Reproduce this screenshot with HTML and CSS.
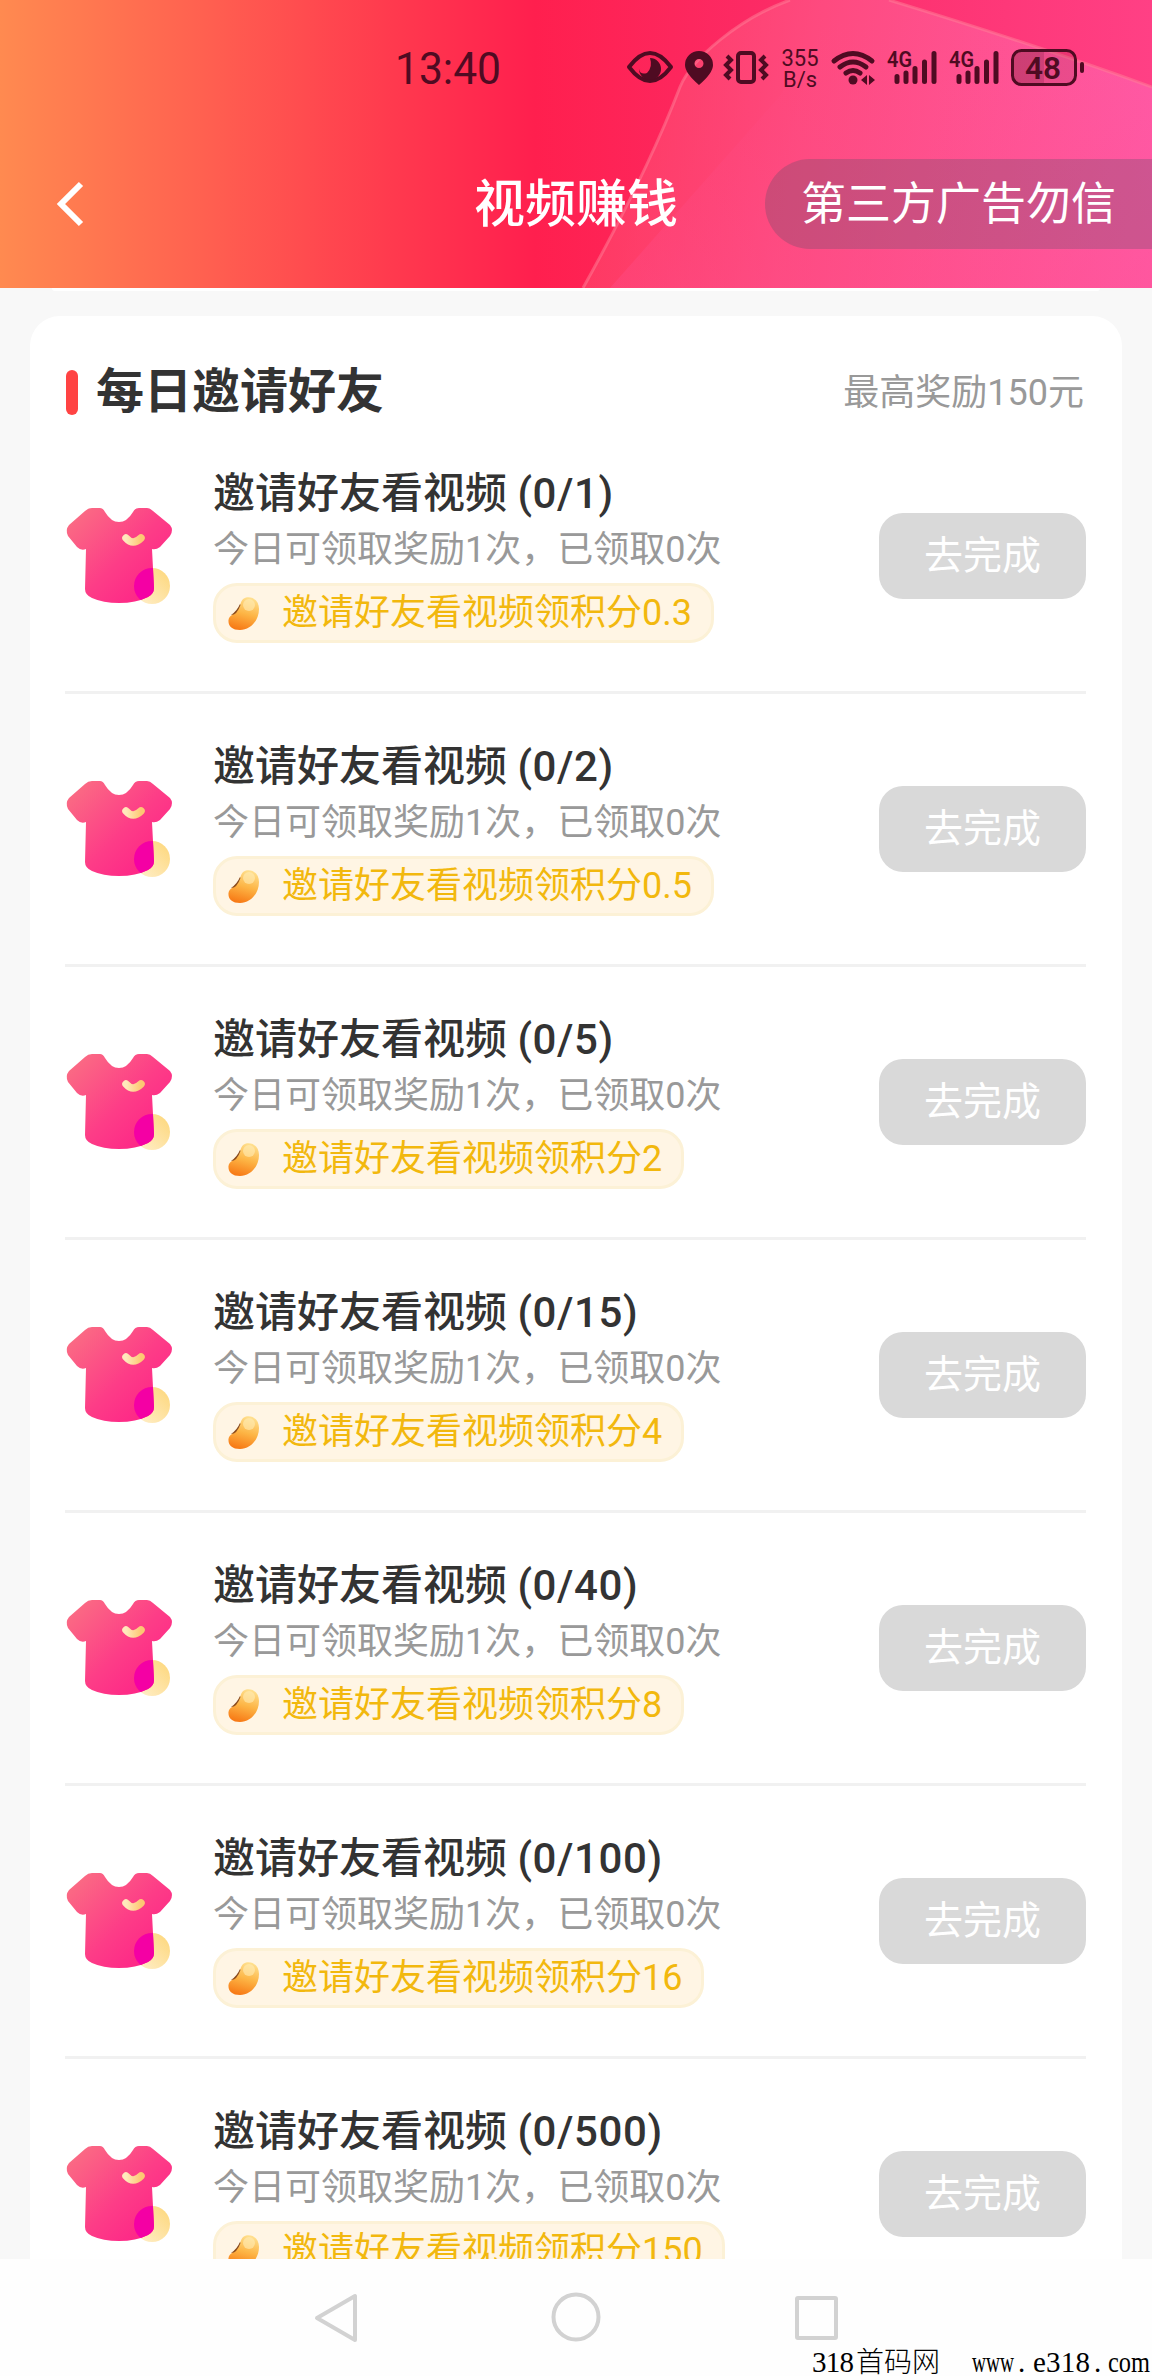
FILE: index.html
```html
<!DOCTYPE html>
<html lang="zh-CN">
<head>
<meta charset="utf-8">
<title>视频赚钱</title>
<link rel="stylesheet" href="styles.css">
</head>
<body>
<svg class="defs" width="0" height="0" aria-hidden="true">
  <defs>
    <linearGradient id="shirtFill" x1="0" y1="0" x2="1" y2="0.9"><stop offset="0" stop-color="#fa7383"/><stop offset=".55" stop-color="#fd3d87"/><stop offset="1" stop-color="#fe1e87"/></linearGradient>
    <linearGradient id="coinFill" x1="1" y1="0" x2="0" y2="1"><stop offset="0" stop-color="#fdd678"/><stop offset="1" stop-color="#fff0cf"/></linearGradient>
    <linearGradient id="smileFill" x1="0" y1="0" x2="1" y2="0"><stop offset="0" stop-color="#ffe9bc"/><stop offset="1" stop-color="#fdc873"/></linearGradient>
    <linearGradient id="beanFill" x1=".65" y1="0" x2=".4" y2="1"><stop offset="0" stop-color="#ffe08f"/><stop offset=".5" stop-color="#fdb545"/><stop offset="1" stop-color="#f77a16"/></linearGradient>
    <clipPath id="shirtClip"><path d="M24 0H34Q38 0 40 5Q46 14 53 14Q61 14 67 5Q69 0 73 0H83L104 17Q108 22 104 28L94 39Q90 42 86 41L88 80Q88 86 82 89Q70 95 53 95Q37 95 26 90Q19 87 19 82V41Q14 42 11 39L2 28Q-1 23 2 18Z"/></clipPath>
  </defs>
  <symbol id="shirt" viewBox="-1 -1 110 100">
    <circle cx="86" cy="78" r="18" fill="url(#coinFill)"/>
    <path d="M26 0H34Q37 0 39 4Q45 14 53 14Q61 14 67 4Q69 0 73 0H81Q84 0 87 3L104 17Q108 22 104 28L94 39Q90 42 86 41L88 80Q88 86 82 89Q70 95 53 95Q37 95 26 90Q19 87 19 81L20 41Q15 43 11 39L2 28Q-1 22 3 17L19 3Q22 0 26 0Z" fill="url(#shirtFill)"/>
    <circle cx="86" cy="78" r="18" fill="#f400a4" clip-path="url(#shirtClip)"/>
    <path d="M60 30Q67 38 75 30" fill="none" stroke="url(#smileFill)" stroke-width="7.500" stroke-linecap="round"/>
  </symbol>
  <symbol id="bean" viewBox="0 0 34 36">
    <path d="M19 1.500C26 0 32 5 32 13C32 25 23 34 13 34C5 34 1 30 1.500 24C2 19 9 18 12 12C14 7 14 3 19 1.500Z" fill="url(#beanFill)"/>
    <path d="M13 8Q10 15 4 19Q10 19 13.500 9Z" fill="#8a4a1c"/>
    <ellipse cx="22" cy="9" rx="6" ry="6" fill="#ffecb8" opacity=".6"/>
  </symbol>
</svg>

<header class="header">
  <svg class="header-art" width="1152" height="288" viewBox="0 0 1152 288" aria-hidden="true">
    <defs>
      <linearGradient id="glow" gradientUnits="userSpaceOnUse" x1="600" y1="144" x2="1152" y2="240"><stop offset="0" stop-color="#ff4f70" stop-opacity=".5"/><stop offset=".35" stop-color="#ff5688" stop-opacity=".7"/><stop offset="1" stop-color="#ff5dac" stop-opacity=".9"/></linearGradient>
      <linearGradient id="fold" gradientUnits="userSpaceOnUse" x1="0" y1="288" x2="0" y2="20"><stop offset="0" stop-color="#ff4f8c" stop-opacity=".35"/><stop offset="1" stop-color="#ff4f8c" stop-opacity="0"/></linearGradient>
    </defs>
    <path d="M583 288C612 236 652 160 680 87C692 58 740 18 790 0H889Q1030 43 1152 87V288Z" fill="url(#glow)"/>
    <path d="M610 288L779 97Q830 20 840 0H889Q1030 43 1152 87V288Z" fill="url(#fold)"/>
    <path d="M583 288C612 236 652 160 680 87C692 58 740 18 790 0M889 0Q1030 43 1152 87" fill="none" stroke="#ff7f98" stroke-opacity=".5" stroke-width="3"/>
  </svg>
  <svg class="status" width="1152" height="100" viewBox="0 0 1152 100" fill="#4f0b22">
    <text x="395" y="84" font-size="44" textLength="106" lengthAdjust="spacingAndGlyphs">13:40</text>
    <g fill="none" stroke="#4f0b22">
      <path d="M629 67Q650 39 671 67Q650 95 629 67Z" stroke-width="4" stroke-linejoin="round"/>
      <rect x="738" y="53" width="16" height="29" rx="3" stroke-width="4"/>
      <path d="M727 56l4 4-5 5 5 5-5 5 4 4M765 56l-4 4 5 5-5 5 5 5-4 4" stroke-width="4"/>
      <path d="M834 61Q853 46 872 61M840 67Q853 57 866 67M846 73Q853 68 860 73" stroke-width="5" stroke-linecap="round"/>
      <rect x="1012.500" y="50.500" width="63" height="34" rx="9" stroke-width="3"/>
    </g>
    <path d="M650 58A11 11 0 1 1 639 69Q640 75 647 73Q653 67 650 58Z"/>
    <path d="M699 51A14 14 0 0 1 713 65Q713 73 699 85Q685 73 685 65A14 14 0 0 1 699 51ZM699 59A4.500 4.500 0 1 0 699 68A4.500 4.500 0 1 0 699 59Z"/>
    <text x="781.500" y="65.500" font-size="23" textLength="37" lengthAdjust="spacingAndGlyphs">355</text>
    <text x="783" y="86.500" font-size="22" textLength="34" lengthAdjust="spacingAndGlyphs">B/s</text>
    <circle cx="853" cy="80" r="4.500"/><path d="M861 80l6-5v10ZM869 75l6 5-6 5Z"/>
    <g id="signal">
      <text class="strong" x="887" y="67" font-size="22" textLength="25" lengthAdjust="spacingAndGlyphs">4G</text>
      <path d="M897 76.500V81.500M906 73V81.500M915 68.500V81.500M924.500 62V81.500M934 53.500V81.500" stroke="#4f0b22" stroke-width="5" stroke-linecap="round"/>
    </g>
    <use href="#signal" x="62"/>
    <path d="M1020 52H1044V83H1020Q1014 83 1014 76V59Q1014 52 1020 52Z" fill-opacity=".28"/>
    <path d="M1044 52H1068Q1074 52 1074 59V76Q1074 83 1068 83H1044Z" fill-opacity=".12"/>
    <rect x="1080" y="62" width="4" height="11" rx="2"/>
    <text class="strong" x="1025" y="79" font-size="31" textLength="36" lengthAdjust="spacingAndGlyphs">48</text>
  </svg>
  <nav class="navbar">
    <svg class="back" width="30" height="46" viewBox="0 0 30 46"><path d="M26 3L6 23L26 43" fill="none" stroke="#fff" stroke-width="6"/></svg>
    <h1 class="page-title">视频赚钱</h1>
    <div class="notice">第三方广告勿信</div>
  </nav>
</header>

<main class="content">
  <div class="prev-card"></div>
  <section class="card">
    <div class="card-head">
      <h2 class="card-title">每日邀请好友</h2>
      <span class="card-note">最高奖励150元</span>
    </div>
    <article class="task"><svg class="shirt"><use href="#shirt"/></svg><div class="info"><h3 class="name">邀请好友看视频 <span class="count">(0/1)</span></h3><p class="desc">今日可领取奖励1次，已领取0次</p><div class="reward"><svg class="bean"><use href="#bean"/></svg>邀请好友看视频领积分0.3</div></div><button class="go">去完成</button></article>
    <article class="task"><svg class="shirt"><use href="#shirt"/></svg><div class="info"><h3 class="name">邀请好友看视频 <span class="count">(0/2)</span></h3><p class="desc">今日可领取奖励1次，已领取0次</p><div class="reward"><svg class="bean"><use href="#bean"/></svg>邀请好友看视频领积分0.5</div></div><button class="go">去完成</button></article>
    <article class="task"><svg class="shirt"><use href="#shirt"/></svg><div class="info"><h3 class="name">邀请好友看视频 <span class="count">(0/5)</span></h3><p class="desc">今日可领取奖励1次，已领取0次</p><div class="reward"><svg class="bean"><use href="#bean"/></svg>邀请好友看视频领积分2</div></div><button class="go">去完成</button></article>
    <article class="task"><svg class="shirt"><use href="#shirt"/></svg><div class="info"><h3 class="name">邀请好友看视频 <span class="count">(0/15)</span></h3><p class="desc">今日可领取奖励1次，已领取0次</p><div class="reward"><svg class="bean"><use href="#bean"/></svg>邀请好友看视频领积分4</div></div><button class="go">去完成</button></article>
    <article class="task"><svg class="shirt"><use href="#shirt"/></svg><div class="info"><h3 class="name">邀请好友看视频 <span class="count">(0/40)</span></h3><p class="desc">今日可领取奖励1次，已领取0次</p><div class="reward"><svg class="bean"><use href="#bean"/></svg>邀请好友看视频领积分8</div></div><button class="go">去完成</button></article>
    <article class="task"><svg class="shirt"><use href="#shirt"/></svg><div class="info"><h3 class="name">邀请好友看视频 <span class="count">(0/100)</span></h3><p class="desc">今日可领取奖励1次，已领取0次</p><div class="reward"><svg class="bean"><use href="#bean"/></svg>邀请好友看视频领积分16</div></div><button class="go">去完成</button></article>
    <article class="task"><svg class="shirt"><use href="#shirt"/></svg><div class="info"><h3 class="name">邀请好友看视频 <span class="count">(0/500)</span></h3><p class="desc">今日可领取奖励1次，已领取0次</p><div class="reward"><svg class="bean"><use href="#bean"/></svg>邀请好友看视频领积分150</div></div><button class="go">去完成</button></article>
  </section>
</main>

<footer class="system-nav">
  <svg width="1152" height="117" viewBox="0 0 1152 117">
    <g fill="none" stroke="#d2d2d2" stroke-width="4" stroke-linejoin="round">
      <path d="M355 37V81L317 59Z"/><circle cx="576" cy="58" r="22.500"/><rect x="797" y="39" width="39" height="40" rx="1"/>
    </g>
    <g class="mark" font-size="29">
      <text x="812" y="113" textLength="42">318</text>
      <text class="cjk" x="856" y="113" font-size="28" textLength="84">首码网</text>
      <text x="972" y="113" textLength="42" lengthAdjust="spacingAndGlyphs">www</text>
      <text x="1018" y="113">.</text>
      <text x="1033" y="113" textLength="57">e318</text>
      <text x="1094" y="113">.</text>
      <text x="1108" y="113" textLength="42" lengthAdjust="spacingAndGlyphs">com</text>
    </g>
  </svg>
</footer>
</body>
</html>
```
FILE: styles.css
```css
* { box-sizing: border-box; margin: 0; padding: 0; }
body {
  width: 1152px;
  height: 2376px;
  overflow: hidden;
  display: flex;
  flex-direction: column;
  background: #f8f8f8;
  color: #333;
  font-family: Roboto, "Noto Sans CJK SC", sans-serif;
}
.defs { position: absolute; }
.header {
  position: relative;
  flex: none;
  height: 288px;
  background: linear-gradient(90deg, #ff8a50 0, #ff5d50 220px, #ff3a4e 390px, #ff1f4e 535px, #fc2a64 750px, #ff4085 1152px);
}
.header-art { position: absolute; inset: 0; }
.status { position: relative; display: block; font-family: Roboto, sans-serif; }
.strong { font-weight: 600; }
.navbar {
  position: relative;
  height: 188px;
  padding: 59px 0 0 55px;
  display: grid;
  grid-template-columns: 30px 1fr 387px;
  align-items: start;
}
.back { margin-top: 22px; }
.page-title {
  height: 90px;
  line-height: 91px;
  padding-left: 389px;
  font-size: 51px;
  font-weight: 500;
  color: #fff;
  white-space: nowrap;
}
.notice {
  height: 90px;
  line-height: 91px;
  padding-left: 36px;
  border-radius: 45px 0 0 45px;
  background: rgba(80, 80, 100, .28);
  color: #fff;
  font-size: 45px;
  white-space: nowrap;
}
.content { flex: none; height: 1971px; overflow: hidden; padding: 0 30px; }
.prev-card { height: 3px; margin: 0 22px 25px; background: #fff; border-radius: 0 0 12px 12px; }
.card { background: #fff; border-radius: 30px; padding: 0 36px 0 35px; }
.card-head { height: 105px; padding-top: 46px; display: flex; justify-content: space-between; }
.card-title { display: flex; align-items: center; gap: 18px; height: 60px; line-height: 64px; font-size: 48px; font-weight: 700; }
.card-title::before { content: ""; width: 12px; height: 45px; margin-left: 1px; border-radius: 6px; background: #ff4343; }
.card-note { height: 60px; line-height: 63px; margin-right: 2px; font-size: 36px; color: #999; }
.task {
  height: 273px;
  display: flex;
  align-items: flex-start;
  padding-top: 44px;
  border-bottom: 3px solid #f1f1f1;
}
.shirt { flex: none; width: 110px; height: 100px; margin: 42px 38px 0 0; }
.info { flex: 1; display: flex; flex-direction: column; align-items: flex-start; white-space: nowrap; }
.name { height: 56px; line-height: 57px; font-size: 42px; font-weight: 500; }
.count { letter-spacing: .6px; }
.desc { height: 62px; line-height: 59px; font-size: 36px; color: #999; }
.reward {
  display: flex;
  align-items: center;
  height: 60px;
  line-height: 54px;
  padding: 0 19px 0 11px;
  border: 3px solid #fcf1d6;
  border-radius: 24px;
  background: #fff5e4;
  color: #f2b80e;
  font-size: 36px;
}
.bean { width: 34px; height: 36px; margin: 2px 21px 0 0; }
.go {
  width: 207px;
  height: 86px;
  margin-top: 48px;
  border: 0;
  border-radius: 24px;
  background: #d9d9d9;
  color: #fff;
  font: 39px/86px Roboto, "Noto Sans CJK SC", sans-serif;
}
.system-nav { flex: none; height: 117px; background: #fefefe; }
.system-nav svg { display: block; }
.mark { fill: #000; font-family: "Liberation Serif", serif; }
.cjk { font-family: "Noto Sans CJK SC", sans-serif; font-weight: 300; }
```
